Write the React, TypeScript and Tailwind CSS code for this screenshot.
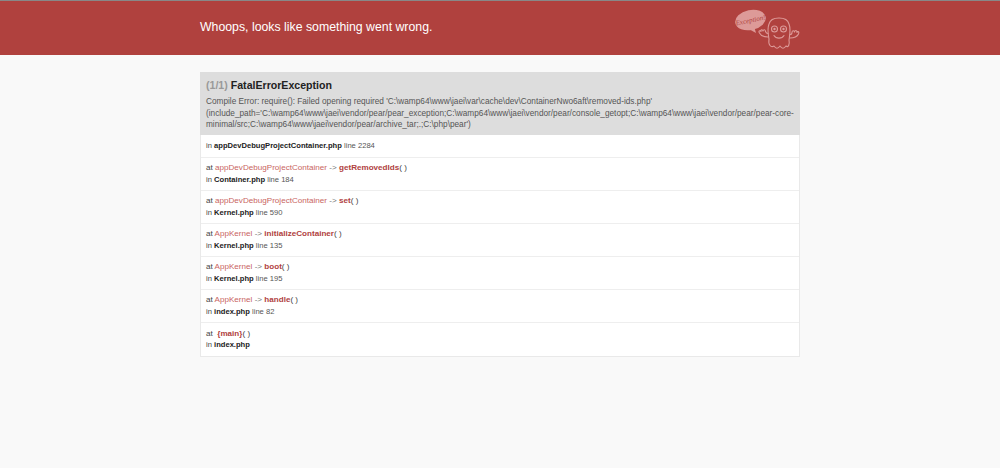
const traces = [
  { at: 'appDevDebugProjectContainer', method: 'getRemovedIds', file: 'Container.php', line: '184' },
  { at: 'appDevDebugProjectContainer', method: 'set', file: 'Kernel.php', line: '590' },
  { at: 'AppKernel', method: 'initializeContainer', file: 'Kernel.php', line: '135' },
  { at: 'AppKernel', method: 'boot', file: 'Kernel.php', line: '195' },
  { at: 'AppKernel', method: 'handle', file: 'index.php', line: '82' },
];

function Ghost() {
  return (
    <svg width="68" height="50" viewBox="0 0 68 50" className="block">
      {/* speech bubble */}
      <ellipse cx="18.5" cy="17" rx="15.5" ry="10" transform="rotate(-12 18.5 17)" fill="#dd9a98" />
      <path d="M15 25 L24 30 L22 23 Z" fill="#dd9a98" />
      <text
        x="18.5"
        y="19.5"
        textAnchor="middle"
        transform="rotate(-12 18.5 17)"
        fontSize="7"
        fontStyle="italic"
        fontFamily="'Liberation Serif', serif"
        fill="#b0413e"
      >
        Exception!
      </text>
      {/* ghost body */}
      <g fill="none" stroke="#dd9a98" strokeWidth="1.1" strokeLinecap="round" strokeLinejoin="round">
        <path d="M37 36 C36 30 35 26 37 21 C39 13 55 13 57 21 C59 26 58 31 57 37 C58 42 56 45 54 43 C52 46 50 46 48 43 C46 46 44 46 42 43 C39 45 36 42 37 36 Z" />
        <path d="M36 34 C33 34 29 33 27.5 30 C26 28 28 27 29 28.5 C28.5 26.5 30.5 26 31 28 C31.5 26 33.5 26.5 33.5 28.5 C34 30 35 30.5 36 30.5" />
        <path d="M58 35 C61 35 65 34 66.5 31 C67.5 29 66 27.5 65 29.5 C65 27 63 27 62.5 29 C62 27 60 27.5 60 29.5 C60 31 59 31.5 58 31.5" />
        <path d="M42 32.5 C44 36 50 36 52 32.5" />
        <circle cx="42.5" cy="26" r="3" />
        <circle cx="51.5" cy="26" r="3" />
      </g>
      <circle cx="42.5" cy="26" r="1.2" fill="#dd9a98" />
      <circle cx="51.5" cy="26" r="1.2" fill="#dd9a98" />
    </svg>
  );
}

export default function App() {
  return (
    <div className="min-h-[468px] bg-[#f9f9f9] font-['Liberation_Sans',Arial,sans-serif] text-[7.6px] leading-[11.5px] text-[#444]">
      {/* Header */}
      <div className="h-[55px] border-t border-[#888] bg-[#b0413e]">
        <div className="mx-auto flex h-full w-[600px] items-center justify-between">
          <h1 className="mb-[2px] text-[12.3px] leading-none text-white">Whoops, looks like something went wrong.</h1>
          <Ghost />
        </div>
      </div>

      {/* Exception block */}
      <div className="mx-auto mt-[17px] w-[600px]">
        <div className="bg-[#ddd] px-[6px] pb-[4px] pt-[6px] text-[#555]">
          <h2 className="mb-[4px] text-[10.6px] leading-[14px] font-bold text-[#222]">
            <span className="text-[#999]">(1/1)</span> FatalErrorException
          </h2>
          <p className="text-[8.25px] leading-[11.5px]">
            Compile Error: require(): Failed opening required 'C:\wamp64\www\jaei\var\cache\dev\ContainerNwo6aft\removed-ids.php'
            (include_path='C:\wamp64\www\jaei\vendor/pear/pear_exception;C:\wamp64\www\jaei\vendor/pear/console_getopt;C:\wamp64\www\jaei\vendor/pear/pear-core-minimal/src;C:\wamp64\www\jaei\vendor/pear/archive_tar;.;C:\php\pear')
          </p>
        </div>

        <div className="border-x border-b border-[#e9e9e9] bg-white">
          <div className="flex h-[23px] items-center border-b border-[#eee] px-[5px]">
            <span>
              in <b className="text-[#222]">appDevDebugProjectContainer.php</b> <span className="text-[#555]">line 2284</span>
            </span>
          </div>

          {traces.map((t, i) => (
            <div key={i} className="flex h-[33px] flex-col justify-center border-b border-[#eee] px-[5px]">
              <div className="text-[8.1px]">
                at <span className="text-[#c9655f]">{t.at}</span> <span className="text-[#777]">-&gt;</span>{' '}
                <b className="text-[#b0413e]">{t.method}</b>( )
              </div>
              <div>
                in <b className="text-[#222]">{t.file}</b> <span className="text-[#555]">line {t.line}</span>
              </div>
            </div>
          ))}

          <div className="flex h-[33px] flex-col justify-center px-[5px]">
            <div className="text-[8.1px]">
              at&nbsp; <b className="text-[#b0413e]">{'{main}'}</b>( )
            </div>
            <div>
              in <b className="text-[#222]">index.php</b>
            </div>
          </div>
        </div>
      </div>
    </div>
  );
}
